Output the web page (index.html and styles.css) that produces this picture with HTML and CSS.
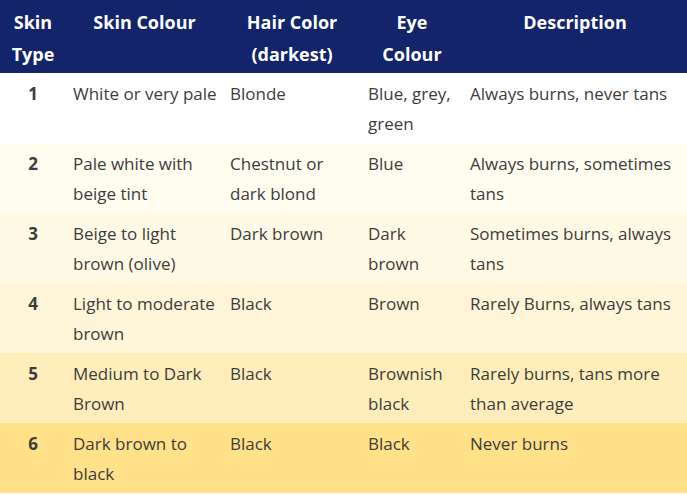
FILE: index.html
```html
<!DOCTYPE html>
<html lang="en">
<head>
<meta charset="utf-8">
<title>Skin Types</title>
<link rel="stylesheet" href="styles.css">
</head>
<body>
<table class="skin-table">
  <colgroup>
    <col class="c1"><col class="c2"><col class="c3"><col class="c4"><col class="c5">
  </colgroup>
  <thead>
    <tr>
      <th>Skin Type</th>
      <th>Skin Colour</th>
      <th>Hair Color (darkest)</th>
      <th>Eye Colour</th>
      <th>Description</th>
    </tr>
  </thead>
  <tbody>
    <tr class="r1">
      <td class="num">1</td>
      <td>White or very pale</td>
      <td>Blonde</td>
      <td>Blue, grey, green</td>
      <td>Always burns, never tans</td>
    </tr>
    <tr class="r2">
      <td class="num">2</td>
      <td>Pale white with beige tint</td>
      <td>Chestnut or dark blond</td>
      <td>Blue</td>
      <td>Always burns, sometimes tans</td>
    </tr>
    <tr class="r3">
      <td class="num">3</td>
      <td>Beige to light brown (olive)</td>
      <td>Dark brown</td>
      <td>Dark brown</td>
      <td>Sometimes burns, always tans</td>
    </tr>
    <tr class="r4">
      <td class="num">4</td>
      <td>Light to moderate brown</td>
      <td>Black</td>
      <td>Brown</td>
      <td>Rarely Burns, always tans</td>
    </tr>
    <tr class="r5">
      <td class="num">5</td>
      <td>Medium to Dark Brown</td>
      <td>Black</td>
      <td>Brownish black</td>
      <td>Rarely burns, tans more than average</td>
    </tr>
    <tr class="r6">
      <td class="num">6</td>
      <td>Dark brown to black</td>
      <td>Black</td>
      <td>Black</td>
      <td>Never burns</td>
    </tr>
  </tbody>
</table>
</body>
</html>
```

FILE: styles.css
```css
html, body {
  margin: 0;
  padding: 0;
  background: #ffffff;
}

.skin-table {
  width: 687px;
  border-collapse: collapse;
  table-layout: fixed;
  font-family: "Open Sans", "Noto Sans", sans-serif;
  font-size: 17px;
  color: #3d3d3d;
}

.c1 { width: 66px; }
.c2 { width: 157px; }
.c3 { width: 138px; }
.c4 { width: 102px; }
.c5 { width: 224px; }

.skin-table th {
  background: #13246a;
  color: #ffffff;
  font-weight: 700;
  font-size: 18px;
  line-height: 32px;
  padding: 6px 7px 3px;
  text-align: center;
  vertical-align: top;
}

.skin-table td {
  line-height: 30px;
  padding: 6px 3px 4px 7px;
  text-align: left;
  vertical-align: top;
}

.skin-table td.num {
  padding-right: 7px;
  text-align: center;
  font-weight: 700;
}

.r1 { background: #ffffff; }
.r2 { background: #fffcf0; }
.r3 { background: #fffae6; }
.r4 { background: #fff6da; }
.r5 { background: #ffeebb; }
.r6 { background: #ffe18a; }
```
